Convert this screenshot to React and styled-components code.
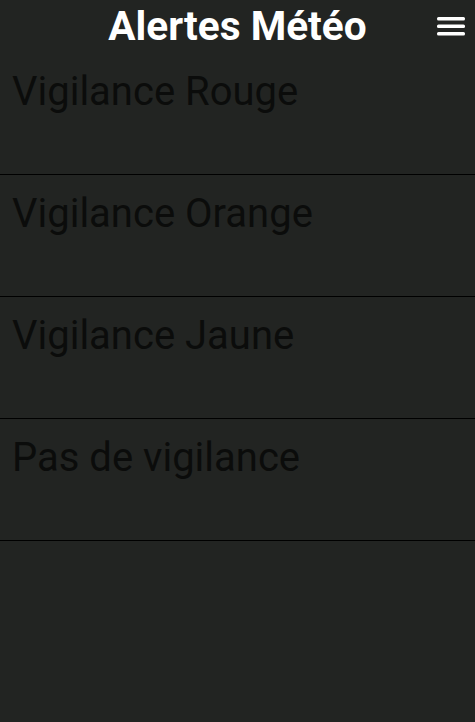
import React from 'react'
import styled, { createGlobalStyle } from 'styled-components'

const GlobalStyle = createGlobalStyle`
  html, body {
    margin: 0;
    padding: 0;
    background: #222422;
  }
  body {
    font-family: Roboto, "Noto Sans", sans-serif;
  }
`;

const Page = styled.div`
  min-height: 722px;
  background: #222422;
`;

const Header = styled.header`
  position: relative;
  height: 53px;
  display: flex;
  align-items: center;
  justify-content: center;
`;

const Title = styled.h1`
  margin: 0;
  color: #ffffff;
  font-size: 40.6px;
  font-weight: 700;
  line-height: 53px;
`;

const MenuButton = styled.button`
  position: absolute;
  right: 6px;
  top: 10px;
  width: 36px;
  height: 32px;
  padding: 0;
  border: none;
  background: none;
  display: flex;
  align-items: center;
  justify-content: center;
  cursor: pointer;
`;

const List = styled.ul`
  list-style: none;
  margin: 0;
  padding: 0;
`;

const Item = styled.li`
  height: 122px;
  box-sizing: border-box;
  border-bottom: 1px solid #000000;
  padding: 15px 12px 0;
`;

const Label = styled.span`
  display: block;
  color: #0b0c0b;
  font-size: 40px;
  line-height: 48px;
`;

const levels = ['Vigilance Rouge', 'Vigilance Orange', 'Vigilance Jaune', 'Pas de vigilance']

const BarsIcon = () => (
  <svg width="28" height="20" viewBox="0 0 28 20">
    <rect x="0" y="1" width="28" height="3.5" rx="1.5" fill="#fff" />
    <rect x="0" y="8.5" width="28" height="3.5" rx="1.5" fill="#fff" />
    <rect x="0" y="16" width="28" height="3.5" rx="1.5" fill="#fff" />
  </svg>
)

const App = () => {
  return (
    <Page>
      <GlobalStyle />
      <Header>
        <Title>Alertes Météo</Title>
        <MenuButton aria-label="menu">
          <BarsIcon />
        </MenuButton>
      </Header>
      <List>
        {levels.map((l) => (
          <Item key={l}>
            <Label>{l}</Label>
          </Item>
        ))}
      </List>
    </Page>
  )
}

export default App
